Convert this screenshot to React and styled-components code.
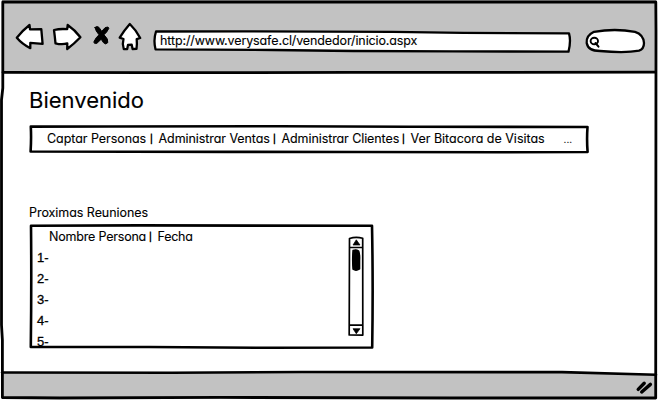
import React from "react";
import styled, { createGlobalStyle } from "styled-components";

const GlobalStyle = createGlobalStyle`
  *, *::before, *::after { box-sizing: border-box; }
  body { margin: 0; background: #fff; }
`;

const Window = styled.div`
  position: relative;
  display: flex;
  flex-direction: column;
  width: 658px;
  height: 400px;
  overflow: hidden;
  background: #fff;
  color: #000;
  font-family: Inter, "Liberation Sans", sans-serif;
  font-feature-settings: "cv11" 1, "calt" 0;
  font-size: 12.5px;
  line-height: 16px;
  -webkit-text-stroke: 0.12px #000;
`;

/* Hand-drawn outline laid over the edges of its box. */
const Outline = styled.svg`
  position: absolute;
  inset: 0;
  width: 100%;
  height: 100%;
  overflow: visible;
  pointer-events: none;
  fill: none;
  stroke: #000;
  stroke-width: ${(p) => p.$weight || 2.6};
  stroke-linecap: round;
  stroke-linejoin: round;
`;

const Toolbar = styled.header`
  display: flex;
  align-items: flex-start;
  height: 73px;
  margin: 0 2px;
  padding: 22px 10px 0 13px;
  background: #c2c2c2;
`;

const NavIcons = styled.div`
  display: flex;
  width: 138px;
  height: 30px;
`;

const NavButton = styled.button`
  display: block;
  width: ${(p) => p.$width}px;
  height: 30px;
  padding: 0;
  border: 0;
  background: none;

  svg {
    display: block;
    overflow: visible;
    fill: #fff;
    stroke: #000;
    stroke-width: 2.3;
    stroke-linejoin: round;
    stroke-linecap: round;
  }
`;

const AddressBar = styled.div`
  position: relative;
  width: 418px;
  height: 22px;
  margin-top: 8px;
  padding: 3px 0 0 7px;
`;

const SearchBox = styled.div`
  position: relative;
  width: 60px;
  height: 24px;
  margin: 7px 0 0 14px;
`;

const Label = styled.span`
  position: relative;
  flex: none;
  white-space: nowrap;
  letter-spacing: ${(p) => p.$track || 0}px;
  width: ${(p) => (p.$width ? p.$width + "px" : "auto")};
`;

const Divider = styled.span`
  flex: none;
  width: 12px;
  padding-right: 2px;
  font-size: 8.5px;
  line-height: 16px;
  text-align: center;
  -webkit-text-stroke: 0.5px #000;
`;

const Content = styled.main`
  flex: 1;
  padding: 14px 0 0 29px;
`;

const Title = styled.h1`
  margin: 0;
  height: 38px;
  font-size: 22px;
  font-weight: 400;
  line-height: 26px;
`;

const Menu = styled.nav`
  position: relative;
  display: flex;
  width: 560px;
  height: 28px;
  padding: 6px 0 0 18px;
`;

const More = styled(Label)`
  margin-left: 19px;
  font-size: 10px;
`;

const SectionTitle = styled.h2`
  margin: 52px 0 0;
  height: 19px;
  font-size: 12.5px;
  font-weight: 400;
  line-height: 16px;
  letter-spacing: -0.05px;
`;

const ListBox = styled.section`
  position: relative;
  display: flex;
  justify-content: space-between;
  width: 345px;
  height: 125px;
  padding: 5px 10px 0 8px;
`;

const ListBody = styled.div`
  height: 124px;
`;

const ListHeader = styled.div`
  display: flex;
  height: 18px;
  padding-left: 12px;
`;

const Rows = styled.ul`
  margin: 0;
  padding: 0;
  list-style: none;
  font: 13px/21px "Liberation Sans", Arial, sans-serif;
`;

const Row = styled.li`
  height: 21px;
  -webkit-text-stroke: 0.3px #000;
`;

const Scrollbar = styled.svg`
  display: block;
  width: 16px;
  height: 100px;
  margin-top: 7px;
  overflow: visible;
  fill: none;
  stroke: #000;
  stroke-width: 1.7;
  stroke-linejoin: round;
`;

const StatusBar = styled.footer`
  position: relative;
  height: 27px;
  margin: 0 2px 1px;
  background: #c2c2c2;
`;

export default function App() {
  return (
    <>
      <GlobalStyle />
      <Window>
        <Toolbar>
          <NavIcons>
            <NavButton $width={37} aria-label="Back">
              <svg width="30" height="30">
                <path d="M1.8 15.8 Q8 8 14.5 3 L15 7.3 L26.3 7.2 L27.6 21.8 L15.3 20.8 L15.3 26.2 Q7 22 1.8 15.8Z" />
              </svg>
            </NavButton>
            <NavButton $width={41} aria-label="Forward">
              <svg width="30" height="30">
                <path d="M2 8 Q8 6.6 15.2 7.2 L15.7 3 Q23 8 28.4 15.3 Q22 22 15.2 27 L15.3 21.4 Q10 23 3.5 21.3 Q2.8 14 2 8Z" />
              </svg>
            </NavButton>
            <NavButton $width={25} aria-label="Stop">
              <svg width="18" height="30">
                <path
                  fill="#000"
                  strokeWidth="1"
                  d="M2 5.4 Q4 3.6 6 5.4 L8.7 9.3 L12.2 5.6 Q15.8 4 15.8 6.4 Q14.2 10 11 12.8 Q15.6 17.2 14.8 20.6 Q12.6 23.2 10.4 20.6 L8.2 17.2 L4 21.2 Q.6 22.4 1 19.5 Q3 15.3 6 12.8 Q2.4 8.8 2 5.4Z"
                />
              </svg>
            </NavButton>
            <NavButton $width={28} aria-label="Home">
              <svg width="24" height="30">
                <path d="M11.8 2 Q6 8.5 1.7 15.7 L5.5 17 Q4 22 5.8 27.1 L9.2 27 L10 23 L13.7 22.7 L14.6 27 L18.5 26.8 Q19.2 22 18.7 17.1 L22.2 16 Q18 8 11.8 2Z" />
              </svg>
            </NavButton>
          </NavIcons>
          <AddressBar>
            <Outline viewBox="0 0 418 22" $weight="2.3">
              <path
                fill="#fff"
                d="M3 1.5 L90 1.3 L240 1.8 L310 2.8 L416 3.4 Q418.2 11 415.5 21.7 L300 21.3 L200 21 L120 20 L2.5 19.3 Q.2 10 3 1.5Z"
              />
            </Outline>
            <Label $track={-0.12}>http://www.verysafe.cl/vendedor/inicio.aspx</Label>
          </AddressBar>
          <SearchBox>
            <Outline viewBox="0 0 60 24" $weight="2.3">
              <path
                fill="#fff"
                d="M9 2.8 Q30 -.8 50 2.8 Q58.5 5.5 59 14 Q59 20 54 21.7 Q40 24.3 15 22 Q3 22 1.7 14 Q1 6.5 9 2.8Z"
              />
              <ellipse cx="9.3" cy="12" rx="3.7" ry="3.3" strokeWidth="1.9" />
              <path d="M10.5 14 L13.5 17.7" strokeWidth="2" />
            </Outline>
          </SearchBox>
        </Toolbar>

        <Content>
          <Title>Bienvenido</Title>
          <Menu>
            <Outline viewBox="0 0 560 28">
              <path d="M1.8 1.6 L80 1.5 L250 1.2 L380 1.7 L558.5 2 Q557.6 15 558.6 27 L470 27.2 L330 27 L200 26.9 L1.6 26.5 Q2.4 14 1.8 1.6Z" />
            </Outline>
            <Label $width={99.5} $track={-0.05}>Captar Personas</Label>
            <Divider>|</Divider>
            <Label $width={111} $track={-0.07}>Administrar Ventas</Label>
            <Divider>|</Divider>
            <Label $width={117} $track={-0.09}>Administrar Clientes</Label>
            <Divider>|</Divider>
            <Label $width={134} $track={-0.02}>Ver Bitacora de Visitas</Label>
            <More>...</More>
          </Menu>

          <SectionTitle>Proximas Reuniones</SectionTitle>
          <ListBox>
            <Outline viewBox="0 0 345 125">
              <path d="M2 1.8 L110 1.4 L343 1.8 Q344.2 60 343.2 123.5 L240 123.8 L120 123 L1.8 123 Q2.6 60 2 1.8Z" />
            </Outline>
            <ListBody>
              <ListHeader>
                <Label $width={96.5} $track={-0.2}>Nombre Persona</Label>
                <Divider>|</Divider>
                <Label $track={-0.25}>Fecha</Label>
              </ListHeader>
              <Rows>
                {[1, 2, 3, 4, 5].map((n) => (
                  <Row key={n}>{n}-</Row>
                ))}
              </Rows>
            </ListBody>
            <Scrollbar viewBox="0 0 16 100">
              <path d="M1.5 2.5 Q8 .3 14.7 2.3 L14.8 99.1 L1.2 99Z M1.5 11.5 H14.8 M1.5 89.2 H14.8" />
              <path fill="#000" strokeWidth=".7" d="M8.3 3.8 L12 9 H5Z M5 92.7 H12 L8.3 97.8Z" />
              <path
                fill="#000"
                strokeWidth="1.4"
                d="M5 14.5 Q8 13 10.7 15 Q12 19 11.6 24 L11.6 33 Q8 35.3 5 33.2 Q4.3 24 5 14.5Z"
              />
            </Scrollbar>
          </ListBox>
        </Content>

        <StatusBar>
          <Outline viewBox="0 0 654 27">
            <path fill="#fff" stroke="none" d="M560 0 H654 V3 Z" />
            <path d="M0 .5 L170 .7 L300 0 L560 .1 L654 2.7" />
            <path d="M636.2 17.4 L642.2 11.3 M639.7 20 L648.4 12.4" strokeWidth="3.4" />
          </Outline>
        </StatusBar>

        <Outline viewBox="0 0 658 400" $weight="2.8">
          <path d="M2.8 2 L655.8 2 L656 30 L655.7 398 L450 398 L220 397.4 L60 398 L2.4 397.5 L2.4 340 L1.5 325 L1.5 100 L2.8 88Z" />
          <path d="M3 72.3 L150 72.7 L350 72.4 L655 72.2" />
        </Outline>
      </Window>
    </>
  );
}
